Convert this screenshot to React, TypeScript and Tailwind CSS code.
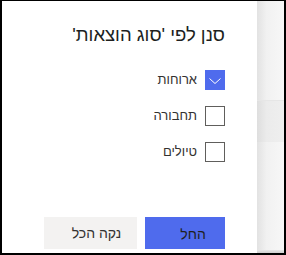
import React from "react";

const items = [
  { label: "ארוחות", checked: true },
  { label: "תחבורה", checked: false },
  { label: "טיולים", checked: false },
];

export default function App() {
  return (
    <div
      className="w-[286px] h-[255px] border-t border-l-2 border-r-2 border-b-2 border-black flex bg-white"
      style={{ fontFamily: '"Liberation Sans", "DejaVu Sans", sans-serif' }}
    >
      <div dir="rtl" className="w-[255px] h-full bg-white flex flex-col pr-[32px] pb-[4px]">
        <h1 className="mt-[20px] text-[18.5px] leading-[28px] text-[#201f1e] font-normal">
          סנן לפי 'סוג הוצאות'
        </h1>
        <div className="mt-[21px] flex flex-col gap-[16px]">
          {items.map((it) => (
            <div key={it.label} className="flex items-center gap-[8px] h-[20px]">
              {it.checked ? (
                <div className="w-[20px] h-[20px] bg-[#4f6bed] flex items-center justify-center">
                  <svg width="20" height="20" viewBox="0 0 20 20">
                    <polyline
                      points="4.5,8.5 10,13.5 15.5,8.5"
                      fill="none"
                      stroke="white"
                      strokeWidth="1"
                    />
                  </svg>
                </div>
              ) : (
                <div className="w-[20px] h-[20px] border border-[#605e5c] bg-white" />
              )}
              <span className="text-[13px] leading-[20px] text-[#323130]">{it.label}</span>
            </div>
          ))}
        </div>
        <div className="mt-auto flex gap-[8px]">
          <button className="w-[80px] h-[32px] bg-[#4f6bed] text-[14px] text-[#201f1e] flex items-center justify-center pl-[16px] pt-[2px]">
            החל
          </button>
          <button className="w-[93px] h-[32px] bg-[#f3f2f1] text-[14px] text-[#323130] flex items-center justify-center pl-[12px]">
            נקה הכל
          </button>
        </div>
      </div>
      <div className="flex-1 h-full flex flex-col bg-[linear-gradient(to_right,#e2e2e2,#f1f1f1_35%,#f7f7f7)]">
        <div className="mt-[99px] h-[42px] border-t border-[#e6e6e6] bg-[linear-gradient(to_right,#dedede,#ebebeb_35%,#efefef)]" />
        <div className="mt-auto h-[3px] bg-[linear-gradient(to_bottom,#e6e6e6,#cfcfcf)]" />
      </div>
    </div>
  );
}
